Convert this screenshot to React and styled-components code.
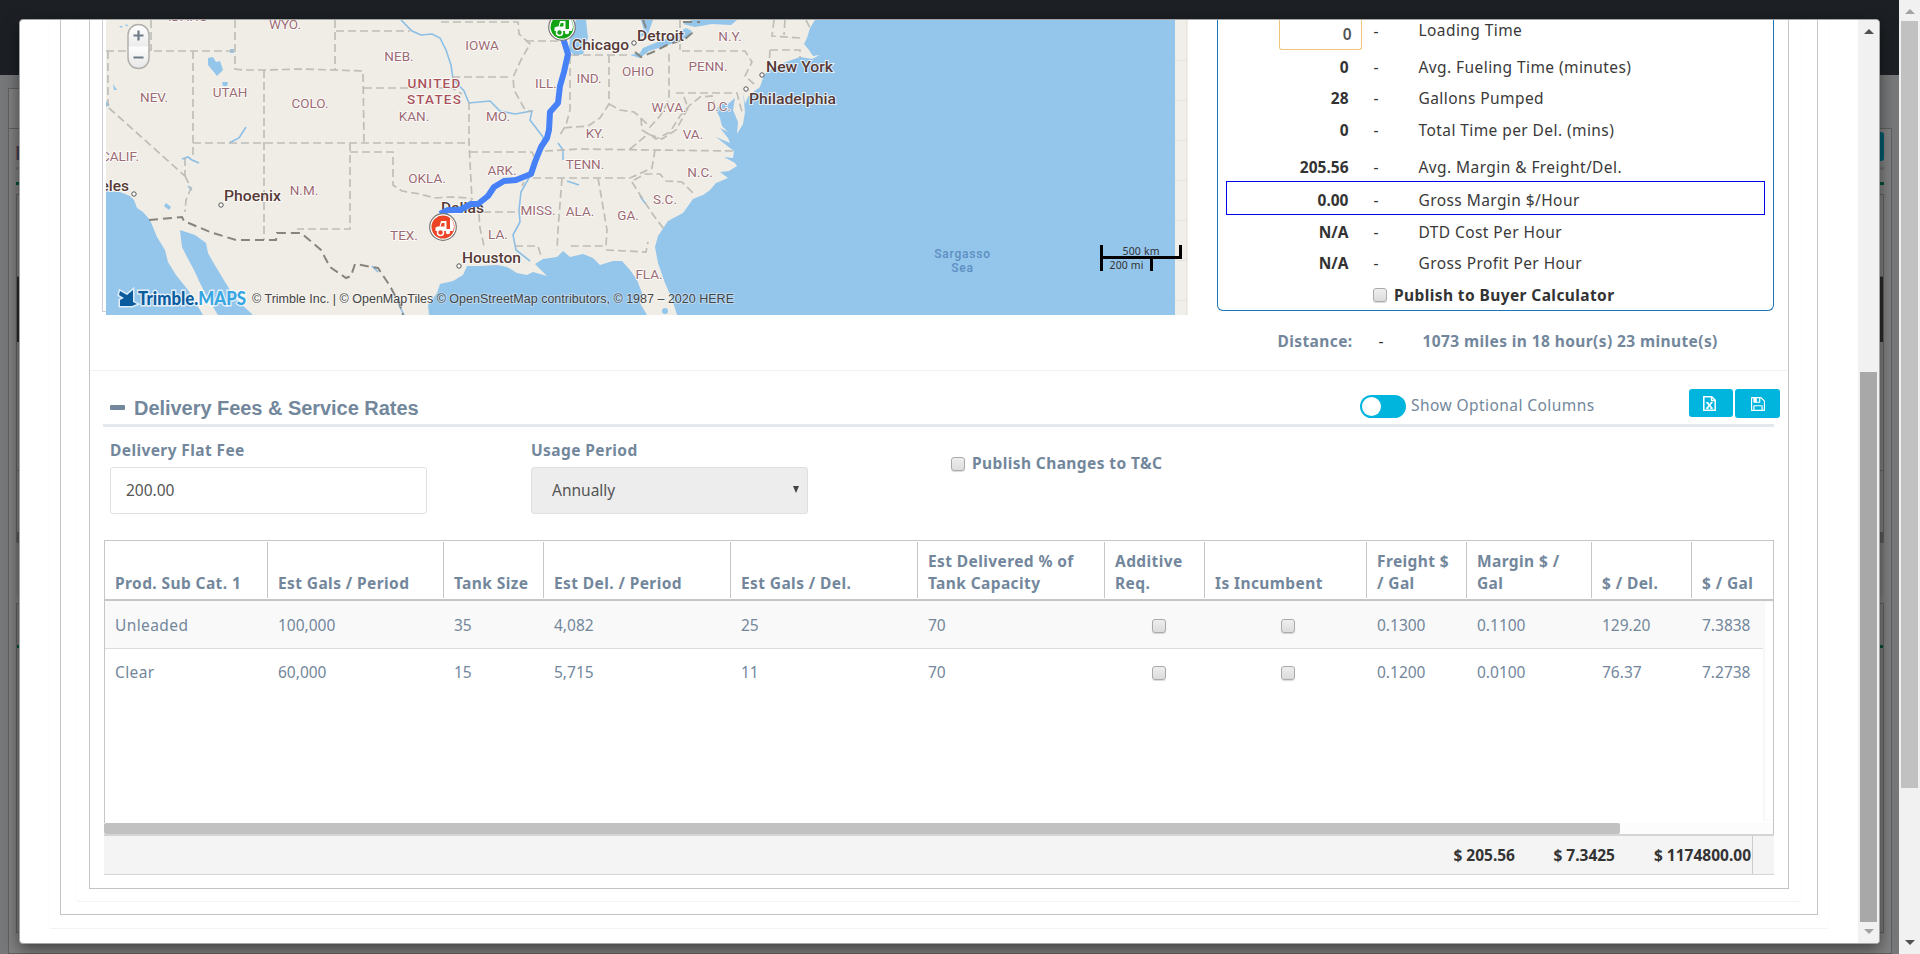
import React from "react";
import styled, { createGlobalStyle } from "styled-components";

const Global = createGlobalStyle`
  * { box-sizing: border-box; }
  html, body { margin: 0; padding: 0; overflow: hidden; }
  body {
    font-family: "Noto Sans", "Open Sans", sans-serif;
    font-size: 15.5px;
    color: #333;
  }
`;

/* ---------- page behind the dialog ---------- */
const Screen = styled.div`
  position: relative;
  width: 1920px;
  height: 954px;
  display: flex;
  overflow: hidden;
  background: #777879;
`;
const Page = styled.div`
  width: 1899px;
  height: 954px;
  overflow: hidden;
`;
const TopBar = styled.div`
  height: 75px;
  background: #1c2024;
  margin-bottom: 13px;
`;
const PageTab = styled.div`
  width: 400px;
  height: 40px;
  margin-left: 8px;
  border: 1px solid #606060;
  border-bottom: 0;
  background: #808080;
`;
const PagePanel = styled.div`
  height: 826px;
  margin: 0 7px 0 8px;
  padding: 3px 7px 0;
  border: 1px solid #606060;
  background: #808080;
`;
const PageTools = styled.div`
  display: flex;
  justify-content: space-between;
  align-items: center;
  height: 29px;
`;
const PageBadge = styled.i`
  width: 60px;
  height: 14px;
  margin-top: 12px;
  background: #3c4560;
  border-left: 1px solid #8a5b4c;
`;
const PageButton = styled.i`
  width: 60px;
  height: 29px;
  border-radius: 3px;
  background: #005b6f;
`;
const Stripe = styled.div`
  height: 3px;
  margin-top: ${(p) => p.$gap}px;
  background: ${(p) => (p.$green ? "#00532f" : "#717171")};
`;
const PageGrid = styled.div`
  height: 349px;
  margin-top: 9px;
  border: 1px solid #606060;
  display: flex;
  flex-direction: column;
`;
const PageBand = styled.div`
  height: ${(p) => p.$h}px;
  background: ${(p) => p.$bg || "transparent"};
  border-bottom: ${(p) => (p.$line ? "1px solid #666" : "0")};
`;
const PageCard = styled.div`
  height: ${(p) => p.$h}px;
  margin-bottom: 7px;
  background: #7b7b7b;
  border: ${(p) => (p.$line ? "1px solid #606060" : "0")};
`;

/* ---------- scrollbars ---------- */
const ScrollBar = styled.div`
  flex: none;
  width: 21px;
  height: 100%;
  padding: ${(p) => p.$pad};
  display: flex;
  flex-direction: column;
  align-items: center;
  background: #f1f1f1;
`;
const Thumb = styled.div`
  width: 17px;
  height: ${(p) => p.$h}px;
  margin-top: ${(p) => p.$gap || 0}px;
  background: ${(p) => p.$bg};
`;
const Arrow = styled.i`
  border: 5px solid transparent;
  border-${(p) => (p.$up ? "bottom" : "top")}-color: ${(p) => p.$c};
  border-${(p) => (p.$up ? "top" : "bottom")}-width: 0;
  margin-bottom: ${(p) => p.$after || 0}px;
  margin-top: ${(p) => p.$before || 0}px;
`;

/* ---------- dialog ---------- */
const Dialog = styled.div`
  position: absolute;
  left: 19px;
  top: 19px;
  width: 1861px;
  height: 925px;
  display: flex;
  overflow: hidden;
  border: 1px solid #a5a5a5;
  border-radius: 4px;
  background: #fff;
`;
const Shade = styled.div`
  position: absolute;
  left: 19px;
  top: 19px;
  width: 1861px;
  height: 925px;
  border-radius: 4px;
  box-shadow: 0 5px 15px rgba(0, 0, 0, 0.5);
`;
const Body = styled.div`
  width: 1838px;
  height: 923px;
  overflow: hidden;
  padding: 0 28px 0 28px;
`;
const Frame = styled.div`
  height: ${(p) => p.$h}px;
  padding: ${(p) => p.$pad};
  border: 1px solid ${(p) => (p.$strong ? "#c4c4c4" : "#fcfcfc")};
  border-bottom-color: ${(p) => (p.$strong ? "#c4c4c4" : "#f3f3f3")};
  border-top: 0;
  border-radius: ${(p) => (p.$strong ? 0 : "0 0 4px 4px")};
`;
const Overview = styled.section`
  height: 351px;
  display: flex;
  padding-left: 12px;
  border-bottom: 1px solid #f2f2f2;
`;
const MapFrame = styled.div`
  flex: none;
  width: 1086px;
  height: 295px;
  margin-right: 29px;
  display: flex;
`;
const MapEdge = styled.div`
  width: 4px;
  height: 292px;
  border: 1px solid #ccd0d6;
  border-width: 0 0 1px 1px;
`;

/* ---------- figures ---------- */
const Figures = styled.div`
  flex: none;
  width: 557px;
`;
const FigureBox = styled.div`
  height: 291px;
  border: 1px solid #1b75bb;
  border-top: 0;
  border-radius: 0 0 6px 6px;
  padding: 0 8px;
`;
const Figure = styled.div`
  height: ${(p) => p.$h}px;
  padding-top: ${(p) => p.$top || 0}px;
  line-height: 22px;
  display: grid;
  grid-template-columns: 121.5px 30px 40px 1fr;
  border: 1px solid ${(p) => (p.$hot ? "#0000f0" : "transparent")};
  border-top-width: ${(p) => (p.$flush ? 0 : 1)}px;
`;
const FigureValue = styled.b`
  font-weight: 700;
  text-align: right;
`;
const FigureInput = styled.div`
  justify-self: end;
  width: 83px;
  height: 30px;
  margin: 0 -13px 0 0;
  padding: 3px 9px;
  border: 1px solid #f0c57a;
  border-top: 0;
  border-radius: 0 0 3px 3px;
  font-weight: 600;
  color: #555;
  text-align: right;
`;
const Dash = styled.span`
  justify-self: end;
`;
const FigureName = styled.span`
  grid-column: 4;
  letter-spacing: 0.42px;
  color: #3a3a3a;
  margin-top: ${(p) => p.$lift || 0}px;
`;
const PublishBuyer = styled.label`
  height: 32px;
  padding: 0 0 0 147px;
  display: flex;
  align-items: center;
  gap: 7px;
  font-weight: 700;
  letter-spacing: 0.4px;
`;
const Box = styled.i`
  flex: none;
  width: 14px;
  height: 14px;
  margin-top: ${(p) => p.$drop || 0}px;
  border: 1px solid #aaa;
  border-radius: 3px;
  background: linear-gradient(#eee, #dcdcdc);
  box-shadow: 0 1px 1px rgba(0, 0, 0, 0.15);
`;
const Distance = styled.div`
  padding: 19px 0 0 60.5px;
  line-height: 22px;
  display: grid;
  grid-template-columns: 101px 44px 1fr;
  font-weight: 700;
  letter-spacing: 0.4px;
  color: #73879c;
`;
const DistanceDash = styled.span`
  color: #333;
  font-weight: 400;
`;

/* ---------- fees ---------- */
const Fees = styled.section`
  padding: 17px 8px 0 13px;
`;
const FeesHead = styled.header`
  height: 39px;
  width: 1671px;
  display: flex;
  border-bottom: 3px solid #e4e7ed;
  white-space: nowrap;
`;
const Minus = styled.i`
  flex: none;
  width: 15px;
  height: 5px;
  margin: 17px 9px 0 7px;
  border-radius: 1px;
  background: #73879c;
`;
const Title = styled.h2`
  flex: none;
  width: 1226px;
  margin: 7px 0 0;
  font: 700 20px/26px "Liberation Sans", Arial, sans-serif;
  letter-spacing: -0.04px;
  color: #73879c;
`;
const Toggle = styled.div`
  flex: none;
  width: 46px;
  height: 23px;
  margin-top: 7px;
  padding: 2px;
  border-radius: 12px;
  background: #00b5dd;
`;
const Knob = styled.div`
  width: 19px;
  height: 19px;
  border-radius: 50%;
  background: #fff;
`;
const ToggleText = styled.span`
  width: 278px;
  flex: none;
  margin: 6px 0 0 5px;
  line-height: 22px;
  letter-spacing: 0.43px;
  color: #73879c;
`;
const IconButton = styled.button`
  flex: none;
  width: ${(p) => p.$w}px;
  height: ${(p) => p.$h}px;
  margin: 1px 2px 0 0;
  padding: 0 ${(p) => p.$trail || 0}px 0 0;
  display: flex;
  align-items: center;
  justify-content: center;
  border: 0;
  border-radius: 3px;
  background: #00b5dd;
`;
const Form = styled.div`
  height: 113px;
  display: flex;
  padding-left: 7px;
  color: #73879c;
`;
const Field = styled.div`
  width: ${(p) => p.$w}px;
  padding-top: 12px;
`;
const FieldLabel = styled.div`
  line-height: 22px;
  height: 28px;
  font-weight: 700;
  letter-spacing: 0.4px;
`;
const Control = styled.div`
  width: ${(p) => p.$w}px;
  height: 47px;
  padding: ${(p) => p.$pad};
  display: flex;
  align-items: center;
  justify-content: space-between;
  border: 1px solid #e0e0e0;
  border-radius: 3px;
  background: ${(p) => (p.$grey ? "#ededed" : "#fff")};
  color: #555;
`;
const Caret = styled.i`
  border: 3.5px solid transparent;
  border-top: 7px solid #444;
  border-bottom: 0;
`;
const PublishTerms = styled.label`
  height: 22px;
  margin-top: 25px;
  display: flex;
  align-items: center;
  gap: 7px;
  font-weight: 700;
  letter-spacing: 0.4px;
`;

/* ---------- table ---------- */
const columns = "163px 176px 100px 187px 187px 187px 100px 162px 100px 125px 100px 1fr";
const Table = styled.div`
  width: 1670px;
  margin-left: 1px;
`;
const HeadRow = styled.div`
  height: 61px;
  padding: 1px 0;
  display: grid;
  grid-template-columns: ${columns};
  border: 1px solid #c6c6c6;
  border-bottom: 2px solid #c6c6c6;
`;
const HeadCell = styled.div`
  padding: 0 4px 4px 10px;
  display: flex;
  align-items: flex-end;
  border-right: ${(p) => (p.$last ? 0 : "1px solid #c6c6c6")};
  font-weight: 700;
  letter-spacing: 0.4px;
  line-height: 22px;
  color: #73879c;
  white-space: pre;
`;
const Rows = styled.div`
  height: 222px;
  border: 1px solid #c6c6c6;
  border-width: 0 1px 0 1px;
  display: flex;
`;
const RowList = styled.div`
  width: 1658px;
`;
const Rail = styled.div`
  width: 10px;
  height: 220px;
  box-shadow: inset 1px 0 3px rgba(0, 0, 0, 0.06);
`;
const Row = styled.div`
  height: ${(p) => (p.$alt ? 48 : 46)}px;
  padding-top: ${(p) => (p.$alt ? 1 : 0)}px;
  display: grid;
  grid-template-columns: ${columns};
  background: ${(p) => (p.$alt ? "#f9f9f9" : "#fff")};
  border-bottom: ${(p) => (p.$alt ? "1px solid #dcdcdc" : 0)};
`;
const Cell = styled.div`
  padding: 0 10px 0 ${(p) => p.$left || 10}px;
  display: flex;
  align-items: center;
  justify-content: ${(p) => (p.$left ? "center" : "flex-start")};
  letter-spacing: ${(p) => (p.$word ? 0.4 : 0)}px;
  color: #73879c;
`;
const ScrollX = styled.div`
  height: 11px;
  border-right: 1px solid #c6c6c6;
  background: #fcfcfc;
`;
const ScrollThumb = styled.div`
  width: 1516px;
  height: 11px;
  border-radius: 2px;
  background: #c1c1c1;
`;
const Totals = styled.div`
  height: 41px;
  display: flex;
  justify-content: flex-end;
  align-items: stretch;
  border: 1px solid #d4d4d4;
  border-width: 2px 0 1px;
  background: #f4f4f4;
  font-weight: 700;
  line-height: 39px;
`;
const Total = styled.div`
  width: ${(p) => p.$w}px;
  text-align: right;
`;
const TotalEnd = styled.div`
  width: 22px;
  margin-left: 1px;
  border-left: 1px solid #ccc;
`;

/* ---------- map ---------- */
const MapSvg = styled.svg`
  display: block;
  width: 1082px;
  height: 295px;
  .state { font: 400 13.5px Roboto, sans-serif; fill: #9c6a72; stroke: #fff; stroke-width: 1.5px; paint-order: stroke; text-anchor: middle; }
  .city { font: 500 15.5px Roboto, sans-serif; fill: #573a37; stroke: #fff; stroke-opacity: 0.75; stroke-width: 2px; paint-order: stroke; }
  .nation { font: 500 13.5px Roboto, sans-serif; letter-spacing: 1.2px; fill: #a8525a; stroke: #fff; stroke-width: 1.5px; paint-order: stroke; text-anchor: middle; }
  .sea { font: 500 12px Roboto, sans-serif; letter-spacing: 0.8px; fill: #5d8fc2; text-anchor: middle; }
  .scale { font: 400 10.5px "Noto Sans", sans-serif; fill: #333; text-anchor: middle; }
  .credit { font: 400 13.33px "Liberation Sans", Arial, sans-serif; fill: #444; stroke: #fff; stroke-opacity: 0.35; stroke-width: 2px; paint-order: stroke; }
  .brand { font: 900 18.5px Lato, sans-serif; stroke: #fff; stroke-opacity: 0.7; stroke-width: 3px; paint-order: stroke; }
`;

const states = [
  ["IDAHO", 188, 21], ["WYO.", 285, 29], ["NEB.", 399, 61], ["NEV.", 154, 102], ["UTAH", 230, 97],
  ["COLO.", 310, 108], ["KAN.", 414, 121], ["CALIF.", 120, 161], ["N.M.", 304, 195],
  ["OKLA.", 427, 183], ["TEX.", 404, 240], ["IOWA", 482, 50], ["ILL.", 546, 88], ["IND.", 589, 83],
  ["OHIO", 638, 76], ["MO.", 498, 121], ["ARK.", 502, 175], ["KY.", 595, 138], ["TENN.", 585, 169],
  ["MISS.", 538, 215], ["ALA.", 580, 216], ["GA.", 628, 220], ["LA.", 498, 239], ["FLA.", 649, 279],
  ["S.C.", 665, 204], ["N.C.", 700, 177], ["VA.", 693, 139], ["W.VA.", 669, 112], ["D.C.", 719, 111],
  ["PENN.", 708, 71], ["N.Y.", 730, 41],
];
const cities = [
  ["Phoenix", 224, 201, 57], ["Dallas", 441, 213, 43], ["Houston", 462, 263, 59],
  ["Chicago", 572, 50, 57], ["Detroit", 637, 41, 47], ["New York", 766, 72, 67],
  ["Philadelphia", 749, 104, 87],
];
const dots = [[134, 194], [221, 205], [459, 266], [634, 43], [762, 75], [746, 89]];
const borders = [
  "M106 51H236M235 20V69L243 70H264L300 69L335 70L363 71L364 142",
  "M151 20V51M193 51V158M108 51V106M109 108L185 176",
  "M264 70V240M193 143H470M335 20V70M336 31H410M364 88H452L462 94",
  "M350 143V229H297M350 152H393V185L402 191L420 194L435 198L450 197L471 198",
  "M185 176L191 188L186 200L185 212M185 158L185 176",
  "M469 102V143L472 200M470 152H532L536 160L528 174L522 186",
  "M452 77H512M441 22H518L519 34L530 44L521 60L513 77L514 90L524 108L532 112",
  "M526 41H560M570 56V110L566 125L560 135M571 55H630M609 55V104L600 118L588 126L575 127L562 128",
  "M609 104L620 110L634 112L641 118L650 127L660 116L669 100L669 50",
  "M641 118L642 130L650 135L656 139L670 132L680 116L690 105L700 97L712 96L716 110",
  "M545 151L580 149L650 150L734 151M533 178H630L652 168L655 150M630 149L648 134L662 139L676 130L688 108L683 94M676 93H737L742 112",
  "M682 51H745L752 62L745 76L754 84M680 20V50M774 20L772 36L800 38M770 50H800V58M770 50L769 66",
  "M562 178L558 230L557 250M598 178L607 230L606 246H570M606 250L646 252L648 242",
  "M634 180L645 174H660L666 181L682 182L694 194M632 182L642 198L654 216L664 229",
  "M478 202L480 228L484 246M471 200V212L520 212M515 246H538L541 256M785 20L784 35M806 20L810 28",
];

const Truck = ({ x, y, color }) => (
  <g transform={`translate(${x} ${y})`}>
    <circle r="13.3" fill="#fff" stroke="#777" strokeWidth="1.2" />
    <circle r="11.500" fill={color} />
    <path d="M-7.500 5V0.500L-5 -.5H-3.500L-2 -6H3.500V2H7V-9Q11 -6 11 0L10 4H-7.500Z" fill="#fff" />
    <path d="M-2.500 -.5L-1.200 -4H1.500V-.5Z" fill={color} />
    <circle cx="-2.500" cy="5.500" r="3" fill={color} stroke="#fff" strokeWidth="1.500" />
    <circle cx="5" cy="5" r="2.200" fill="#fff" />
  </g>
);

const RouteMap = () => (
  <MapSvg viewBox="106 20 1082 295">
    <defs>
      <linearGradient id="zoomBtn" x1="0" x2="0" y1="0" y2="1">
        <stop offset="0" stopColor="#fff" /><stop offset=".48" stopColor="#ececec" />
        <stop offset=".52" stopColor="#fdfdfd" /><stop offset="1" stopColor="#e6e6e6" />
      </linearGradient>
    </defs>
    <rect x="106" y="20" width="1082" height="295" fill="#f1efe9" />
    <rect x="106" y="20" width="1069" height="295" fill="#94c5eb" />
    <path d="M1175 60.5h13M1175 100.5h13M1175 140.5h13M1175 180.5h13M1175 220.5h13M1175 260.5h13M1175 300.5h13M1186.500 20V315" stroke="#e6e4dd" fill="none" />
    <path
      fill="#f0ede6"
      d="M106 20H815L810 28L807 38L804 44L809 50L813 56L820 55L812 59L800 57L786 62L767 71L763 78L760 87L752 93L748 97L745 104L743 92L745 112L743 124L737 134L738 122L733 110L735 98L728 104L722 103L716 110L720 118L722 126L728 132L720 128L728 138L730 143L716 137L730 148L734 151L733 158L724 157L735 163L737 166L729 171L720 172L728 178L716 183L710 190L703 195L693 199L683 213L668 221L658 236L655 247L658 263L665 283L672 299L677 315H647L640 303L642 293L637 280L630 270L622 261L613 261L600 265L593 258L583 254L570 257L563 251L557 257L543 259L535 264L540 269L547 276L533 272L527 275L517 273L507 267L497 265L480 266L467 266L463 275L453 281L440 284L437 293L428 305L429 315H253L240 303L230 290L222 277L213 262L208 253L206 243L195 235L180 230L182 247L187 257L194 270L200 283L208 299L218 315H203L188 290L176 275L168 262L165 250L157 237L150 220L143 212L137 208L134 200L130 196L120 192L106 191Z"
    />
    <g fill="#94c5eb">
      <path d="M576 20L570 38L569 50L575 56L583 54L588 38L586 20Z" />
      <path d="M630 55L640 58L649 51L668 45L686 38L692 31L686 28L671 37L655 43L643 48L640 53Z" />
      <path d="M641 20L644 30L638 38L648 34L653 20Z" />
      <path d="M683 24L692 20H737L731 25L712 24L695 27Z" />
      <path d="M208 58L213 57L216 62L220 61L223 70L217 76L213 71L208 65ZM222 82L228 82L227 86L223 86ZM166 203L171 207L169 210L164 206ZM113 84L117 90L114 90ZM119 26H123L121 28ZM125 24L128 25L127 27ZM106 101L110 105L106 107ZM230 49H234V53H230Z" />
      <circle cx="725" cy="35" r="1.5" /><circle cx="665" cy="311" r="3" /><circle cx="205" cy="274" r="2" />
    </g>
    <g fill="none" stroke="#8cbfe6" strokeWidth="1.6">
      <path d="M401 20L412 31L421 35L432 34L440 38L446 50L451 65L453 79L464 91L469 103L490 101L500 111L515 114L532 111L530 120L543 137L543 148L537 160L529 178L521 192L519 210L520 222L513 235L516 250L530 261" />
      <path d="M229 143L239 138L246 127M182 159L188 157L192 160L199 163M188 186L192 190M372 266L378 272M399 305L404 315M558 143L563 150L563 160M567 181L579 185M640 196L645 203" />
    </g>
    <g fill="none" stroke="#b9b8b3" strokeWidth="1.7" strokeDasharray="8 4" opacity=".9">
      {borders.map((d) => <path key={d} d={d} />)}
    </g>
    <path
      d="M149 220L182 217L184 221L210 232L236 240H276L277 233H301L321 250L330 267L346 278L351 276L355 264L378 268L390 286L400 305L403 315M635 52L641 57L653 52L667 45L685 39L692 33L690 28M643 20L646 28M683 22H700"
      fill="none" stroke="#858580" strokeWidth="2" strokeDasharray="9 5"
    />
    {states.map(([t, x, y]) => <text key={t} className="state" x={x} y={y}>{t}</text>)}
    <text className="nation" x="434.500" y="87.500">UNITED</text>
    <text className="nation" x="434.500" y="103.500">STATES</text>
    {dots.map(([x, y]) => <circle key={x} cx={x} cy={y} r="2.2" fill="#fff" stroke="#555" />)}
    <text className="city" x="129" y="191" textAnchor="end">Angeles</text>
    {cities.map(([t, x, y, w]) => <text key={t} className="city" x={x} y={y} textLength={w} lengthAdjust="spacingAndGlyphs">{t}</text>)}
    <path
      d="M440 214L448 210L460 210L471 204H478L488 196L494 187L504 181L516 180L531 174L535 162L541 147L547 138L549 130L550 112L558 103L560 86L564 72L568 54L563 38"
      fill="none" stroke="#4681f8" strokeWidth="6" strokeLinejoin="round"
    />
    <Truck x={562} y={27} color="#12a312" />
    <Truck x={443} y={227} color="#ec4424" />
    <rect x="128" y="24.500" width="21" height="44" rx="10.500" fill="url(#zoomBtn)" stroke="#b0afaa" strokeWidth="1.500" />
    <path d="M133.500 35.500H143.500M138.500 30.500V40.500M133.500 57.500H143.500" stroke="#6f7a87" strokeWidth="2.200" />
    <text className="sea" x="962.500" y="258">Sargasso</text>
    <text className="sea" x="962.500" y="271.500">Sea</text>
    <path d="M1101.500 245V271M1101 257.500H1180.500V245M1151.500 258V271" fill="none" stroke="#000" strokeWidth="3" />
    <text className="scale" x="1141" y="254.500" textLength="37">500 km</text>
    <text className="scale" x="1126.500" y="268.500" textLength="34">200 mi</text>
    <path
      d="M120 291L127 295L133 290V302L137 304L132 306H120V300L124 298L119 295Z"
      fill="#0b5c9e" stroke="#fff" strokeOpacity=".7" strokeWidth="3" paintOrder="stroke"
    />
    <text className="brand" x="138" y="305" textLength="108" lengthAdjust="spacingAndGlyphs">
      <tspan fill="#0b5c9e">Trimble.</tspan><tspan fill="#37a6e2">MAPS</tspan>
    </text>
    <text className="credit" x="252" y="303" textLength="482" lengthAdjust="spacingAndGlyphs">© Trimble Inc. | © OpenMapTiles © OpenStreetMap contributors, © 1987 – 2020 HERE</text>
  </MapSvg>
);

const SheetIcon = () => (
  <svg width="13" height="15" viewBox="0 0 13 15" fill="none" stroke="#fff">
    <path d="M.8.8H8.700L12.200 4.300V14.200H.8Z" strokeWidth="1.500" />
    <path d="M8.500 1V4.500H12" strokeWidth="1.300" />
    <path d="M4 6.500L9 12.300M8.800 6.500L4 12.300" strokeWidth="1.700" />
    <path d="M3.200 6.500H5.500M7.700 6.500H9.700M3.200 12.300H5.500M7.300 12.300H9.700" strokeWidth="1.200" />
  </svg>
);
const FloppyIcon = () => (
  <svg width="14" height="14" viewBox="0 128 1536 1536" fill="#fff">
    <path d="M384 1536h768v-384h-768v384zM1280 1536h128v-896q0-14-10-38.500t-20-34.500l-281-281q-10-10-34-20t-39-10v416q0 40-28 68t-68 28h-576q-40 0-68-28t-28-68v-416h-128v1280h128v-416q0-40 28-68t68-28h832q40 0 68 28t28 68v416zM896 608v-320q0-13-9.500-22.500t-22.500-9.500h-192q-13 0-22.500 9.500t-9.500 22.500v320q0 13 9.500 22.500t22.500 9.500h192q13 0 22.500-9.500t9.500-22.500zM1536 640v928q0 40-28 68t-68 28h-1344q-40 0-68-28t-28-68v-1344q0-40 28-68t68-28h928q40 0 88 20t76 48l280 280q28 28 48 76t20 88z" />
  </svg>
);

const figures = [
  { v: "0", n: "Avg. Fueling Time (minutes)", h: 32, top: 3 },
  { v: "28", n: "Gallons Pumped", h: 32, top: 2 },
  { v: "0", n: "Total Time per Del. (mins)", h: 32, top: 2 },
  { v: "205.56", n: "Avg. Margin & Freight/Del.", h: 33, top: 7 },
  { v: "0.00", n: "Gross Margin $/Hour", h: 34, top: 7, hot: true },
  { v: "N/A", n: "DTD Cost Per Hour", h: 32, top: 5 },
  { v: "N/A", n: "Gross Profit Per Hour", h: 32, top: 4 },
];
const heads = [
  "Prod. Sub Cat. 1", "Est Gals / Period", "Tank Size", "Est Del. / Period", "Est Gals / Del.",
  "Est Delivered % of\nTank Capacity", "Additive\nReq.", "Is Incumbent", "Freight $\n/ Gal",
  "Margin $ /\nGal", "$ / Del.", "$ / Gal",
];
const rows = [
  ["Unleaded", "100,000", "35", "4,082", "25", "70", null, null, "0.1300", "0.1100", "129.20", "7.3838"],
  ["Clear", "60,000", "15", "5,715", "11", "70", null, null, "0.1200", "0.0100", "76.37", "7.2738"],
];
const boxIndent = { 6: 18, 7: 13 };

export default function App() {
  return (
    <Screen>
      <Global />
      <Page>
        <TopBar />
        <PageTab />
        <PagePanel>
          <PageTools><PageBadge /><PageButton /></PageTools>
          <Stripe $gap={6} />
          <Stripe $gap={12} $green />
          <PageGrid>
            <PageBand $h={82} $line />
            <PageBand $h={65} $bg="#2b2b2b" />
            <PageBand $h={64} />
            <PageBand $h={65} $line />
            <PageBand $h={61} />
            <PageBand $h={10} $bg="#5a5a5a" />
          </PageGrid>
          <PageCard $h={53} />
          <PageCard $h={330} $line><Stripe $gap={41} $green /></PageCard>
        </PagePanel>
      </Page>
      <ScrollBar $pad="9px 0">
        <Arrow $up $c="#a3a3a3" $after={7} />
        <Thumb $h={767} $bg="#c1c1c1" />
        <Arrow $c="#505050" $before={152} />
      </ScrollBar>
      <Shade />
      <Dialog>
        <Body>
          <Frame $h={909} $pad="0 11px">
            <Frame $strong $h={895} $pad="0 15px">
              <Frame $h={882} $pad="0 12px">
                <Frame $strong $h={869} $pad="0">
                  <Overview>
                    <MapFrame>
                      <MapEdge />
                      <RouteMap />
                    </MapFrame>
                    <Figures>
                      <FigureBox>
                        <Figure $h={32} $flush>
                          <FigureInput>0</FigureInput>
                          <Dash>-</Dash>
                          <FigureName $lift={-1}>Loading Time</FigureName>
                        </Figure>
                        {figures.map((f) => (
                          <Figure key={f.n} $h={f.h} $top={f.top} $hot={f.hot}>
                            <FigureValue>{f.v}</FigureValue>
                            <Dash>-</Dash>
                            <FigureName>{f.n}</FigureName>
                          </Figure>
                        ))}
                        <PublishBuyer><Box />Publish to Buyer Calculator</PublishBuyer>
                      </FigureBox>
                      <Distance>
                        <span>Distance:</span>
                        <DistanceDash>-</DistanceDash>
                        <span>1073 miles in 18 hour(s) 23 minute(s)</span>
                      </Distance>
                    </Figures>
                  </Overview>
                  <Fees>
                    <FeesHead>
                      <Minus />
                      <Title>Delivery Fees &amp; Service Rates</Title>
                      <Toggle><Knob /></Toggle>
                      <ToggleText>Show Optional Columns</ToggleText>
                      <IconButton $w={44} $h={28} $trail={4}><SheetIcon /></IconButton>
                      <IconButton $w={45} $h={29}><FloppyIcon /></IconButton>
                    </FeesHead>
                    <Form>
                      <Field $w={421}>
                        <FieldLabel>Delivery Flat Fee</FieldLabel>
                        <Control $w={317} $pad="0 15px 2px">200.00</Control>
                      </Field>
                      <Field $w={420}>
                        <FieldLabel>Usage Period</FieldLabel>
                        <Control $w={277} $grey $pad="0 8px 2px 20px">Annually<Caret /></Control>
                      </Field>
                      <PublishTerms><Box $drop={1} />Publish Changes to T&amp;C</PublishTerms>
                    </Form>
                    <Table>
                      <HeadRow>
                        {heads.map((h, i) => <HeadCell key={h} $last={i === 11}>{h}</HeadCell>)}
                      </HeadRow>
                      <Rows>
                        <RowList>
                          {rows.map((r, i) => (
                            <Row key={r[0]} $alt={i === 0}>
                              {r.map((c, j) => (
                                <Cell key={j} $left={boxIndent[j]} $word={j === 0}>{c === null ? <Box $drop={2} /> : c}</Cell>
                              ))}
                            </Row>
                          ))}
                        </RowList>
                        <Rail />
                      </Rows>
                      <ScrollX><ScrollThumb /></ScrollX>
                      <Totals>
                        <Total $w={100}>$ 205.56</Total>
                        <Total $w={100}>$ 7.3425</Total>
                        <Total $w={136}>$ 1174800.00</Total>
                        <TotalEnd />
                      </Totals>
                    </Table>
                  </Fees>
                </Frame>
              </Frame>
            </Frame>
          </Frame>
        </Body>
        <ScrollBar $pad="9px 0">
          <Arrow $up $c="#505050" />
          <Thumb $gap={338} $h={550} $bg="#a8a8a8" />
          <Arrow $c="#a3a3a3" $before={7} />
        </ScrollBar>
      </Dialog>
    </Screen>
  );
}
